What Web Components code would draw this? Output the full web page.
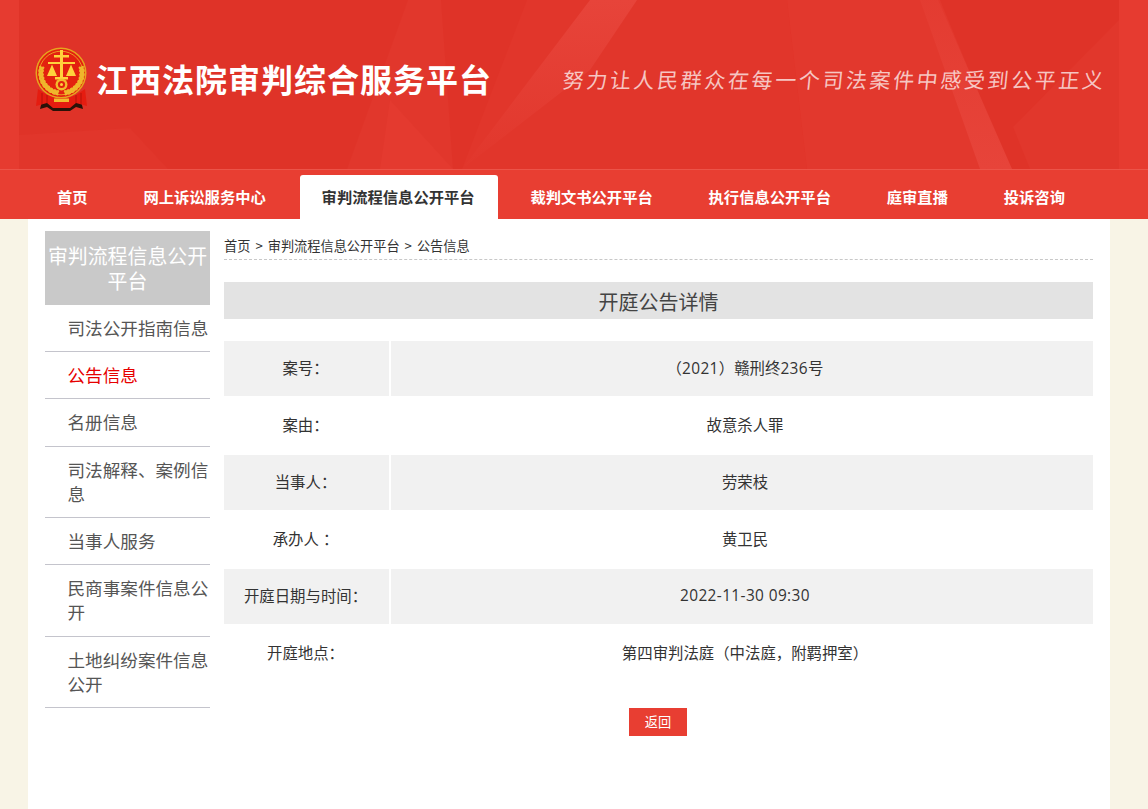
<!DOCTYPE html>
<html lang="zh-CN">
<head>
<meta charset="utf-8">
<title>开庭公告详情</title>
<style>
  html, body { margin: 0; padding: 0; }
  body {
    background: #f8f4e6;
    font-family: "Noto Sans CJK SC", "Liberation Sans", sans-serif;
    color: #333;
  }
</style>
</head>
<body>
<site-header></site-header>
<site-nav>
  <a>首页</a>
  <a>网上诉讼服务中心</a>
  <a class="on">审判流程信息公开平台</a>
  <a>裁判文书公开平台</a>
  <a>执行信息公开平台</a>
  <a>庭审直播</a>
  <a>投诉咨询</a>
</site-nav>
<page-body>
  <side-menu slot="side" heading="审判流程信息公开平台">
    <menu-item>司法公开指南信息</menu-item>
    <menu-item active>公告信息</menu-item>
    <menu-item>名册信息</menu-item>
    <menu-item>司法解释、案例信息</menu-item>
    <menu-item>当事人服务</menu-item>
    <menu-item>民商事案件信息公开</menu-item>
    <menu-item>土地纠纷案件信息公开</menu-item>
  </side-menu>
  <notice-detail heading="开庭公告详情">
    <detail-row label="案号：">（<span>2021</span>）赣刑终<span>236</span>号</detail-row>
    <detail-row label="案由：">故意杀人罪</detail-row>
    <detail-row label="当事人：">劳荣枝</detail-row>
    <detail-row label="承办人 ：">黄卫民</detail-row>
    <detail-row label="开庭日期与时间："><span>2022-11-30 09:30</span></detail-row>
    <detail-row label="开庭地点：">第四审判法庭（中法庭，附羁押室）</detail-row>
  </notice-detail>
</page-body>

<script>
function shadow(el, html) {
  el.attachShadow({ mode: 'open' }).innerHTML = html;
}

// one side of the wheat wreath on the emblem
function wheat() {
  let out = '';
  for (let i = 0; i < 9; i++) {
    const a = (168 + i * 11) * Math.PI / 180;
    const x = 27 + 20 * Math.cos(a);
    const y = 27 - 20 * Math.sin(a);
    const deg = 90 - (168 + i * 11);
    out += `<ellipse cx="${x.toFixed(1)}" cy="${y.toFixed(1)}" rx="3.4" ry="1.5" transform="rotate(${deg - 45} ${x.toFixed(1)} ${y.toFixed(1)})"/>`;
    out += `<ellipse cx="${x.toFixed(1)}" cy="${y.toFixed(1)}" rx="3.4" ry="1.5" transform="rotate(${deg + 45} ${x.toFixed(1)} ${y.toFixed(1)})"/>`;
  }
  return out;
}

class SiteHeader extends HTMLElement {
  connectedCallback() {
    shadow(this, `
      <style>
        :host { display: block; height: 169px; background: #e63b30; position: relative; overflow: hidden; }
        .bg { position: absolute; left: 19px; top: 0; width: 1100px; height: 169px; }
        .bar { position: relative; display: flex; align-items: center; height: 100%; padding: 0 0 12px 34px; box-sizing: border-box; }
        .logo { width: 54px; height: 66px; flex: none; }
        h1 { margin: 0 0 2px 8px; font-size: 32px; line-height: 40px; font-weight: 700; color: #fff; letter-spacing: 1px; white-space: nowrap; }
        p { margin: 0 0 0 71px; font-size: 21px; line-height: 30px; letter-spacing: 2.6px; color: rgba(255,255,255,.72); white-space: nowrap; transform: skewX(-6deg); }
      </style>
      <svg class="bg" viewBox="19 0 1100 169" preserveAspectRatio="none" aria-hidden="true">
        <defs>
          <linearGradient id="fadeDown" x1="0" y1="0" x2="0" y2="1">
            <stop offset="0" stop-color="#e7443a"/>
            <stop offset="1" stop-color="#e7443a" stop-opacity=".05"/>
          </linearGradient>
          <linearGradient id="fadeUp" x1="0" y1="1" x2="0" y2="0">
            <stop offset="0" stop-color="#e7443a"/>
            <stop offset="1" stop-color="#e7443a" stop-opacity=".3"/>
          </linearGradient>
        </defs>
        <rect x="19" width="1100" height="169" fill="#df3328"/>
        <polygon points="19,135 130,128 168,169 19,169" fill="#e1362b"/>
        <polygon points="408,0 441,0 453,169 347,169" fill="#e1372c"/>
        <polygon points="390,100 453,169 380,169" fill="#e43a2f"/>
        <polygon points="527,0 787,0 807,169 462,169" fill="#e1362b"/>
        <polygon points="590,0 637,0 590,70 462,169" fill="url(#fadeDown)"/>
        <polygon points="787,0 940,0 1010,169 807,169" fill="#e2382d"/>
        <polygon points="920,0 938,0 1012,169 980,169" fill="url(#fadeUp)"/>
        <polygon points="1013,127 1119,20 1119,169 1030,169" fill="#e1372c"/>
      </svg>
      <div class="bar">
        <svg class="logo" viewBox="0 0 54 66" aria-hidden="true">
          <path d="M8 55 L6 63 L13 61 L19 65 L36 65 L42 61 L49 63 L47 55 Z" fill="#2a1208"/>
          <circle cx="27" cy="27" r="25.500" fill="#e7a51e"/>
          <circle cx="27" cy="27" r="24" fill="#e3210f"/>
          <circle cx="27" cy="27" r="21.800" fill="none" stroke="#f0b52a" stroke-width=".8"/>
          <g fill="#efb62c">${wheat()}</g>
          <g fill="#efb62c" transform="matrix(-1 0 0 1 55 0)">${wheat()}</g>
          <path d="M26 4 h3 v5 h6 v2.500 h-6 v4.500 h12 v2 h-12 v13 h5 v2.500 h-13 v-2.500 h5 v-13 h-12 v-2 h12 v-4.500 h-6 v-2.500 h6 z" fill="#ffd23c"/>
          <path d="M18 18.500 L13 30 H23 Z M37 18.500 L32 30 H42 Z" fill="#ffd23c"/>
          <circle cx="27.500" cy="38.500" r="6" fill="#f2bb2d"/>
          <circle cx="27.500" cy="38.500" r="3.600" fill="#e3210f"/>
          <circle cx="27.500" cy="38.500" r="1.500" fill="#ffd23c"/>
          <path d="M4 43 L2 60 L13 57 L19 62 L36 62 L42 57 L53 60 L51 43 L42 49 L34 52 L21 52 L13 49 Z" fill="#e51c10"/>
          <path d="M20 52.500 H35 V56 H20 Z" fill="#f2bb2d"/>
          <path d="M13 49 V57 M8 47 V58 M42 49 V57 M47 47 V58" stroke="#a81208" stroke-width=".8"/>
        </svg>
        <h1>江西法院审判综合服务平台</h1>
        <p>努力让人民群众在每一个司法案件中感受到公平正义</p>
      </div>`);
  }
}

class SiteNav extends HTMLElement {
  connectedCallback() {
    shadow(this, `
      <style>
        :host { display: block; height: 49px; background: #e83e32; border-top: 1px solid #ec5449; }
        nav { display: flex; align-items: flex-end; gap: 11.8px; height: 100%; padding-left: 35px; box-sizing: border-box; }
        ::slotted(a) {
          display: block; height: 44px; line-height: 43px; padding: 0 22px;
          font-size: 15.3px; font-weight: 700; color: #fff; white-space: nowrap;
        }
        ::slotted(a.on) { background: #fff; color: #333; border-radius: 3px 3px 0 0; padding-right: 23.4px; margin-right: -1.4px; }
      </style>
      <nav><slot></slot></nav>`);
  }
}

class PageBody extends HTMLElement {
  connectedCallback() {
    shadow(this, `
      <style>
        :host { display: block; width: 1082px; min-height: 590px; margin-left: 28px; background: #fff; }
        .wrap { display: flex; padding: 12px 17px 0 17px; gap: 14px; }
      </style>
      <div class="wrap"><slot name="side"></slot><slot></slot></div>`);
  }
}

class SideMenu extends HTMLElement {
  connectedCallback() {
    shadow(this, `
      <style>
        :host { display: block; width: 165px; flex: none; }
        h2 { margin: 0; height: 74px; padding: 0 2px; box-sizing: border-box; display: flex; align-items: center; justify-content: center; text-align: center; background: #c9c9c9; color: #fff; font-size: 19.9px; line-height: 25px; font-weight: 400; }
      </style>
      <h2>${this.getAttribute('heading')}</h2>
      <slot></slot>`);
  }
}

class MenuItem extends HTMLElement {
  connectedCallback() {
    const color = this.hasAttribute('active') ? '#e60000' : '#555';
    shadow(this, `
      <style>
        :host { display: block; padding: 11px 0 11px 22.5px; border-bottom: 1px solid #c4c4cc; font-size: 17.6px; line-height: 24.18px; color: ${color}; }
      </style>
      <slot></slot>`);
  }
}

class NoticeDetail extends HTMLElement {
  connectedCallback() {
    shadow(this, `
      <style>
        :host { display: block; width: 869px; flex: none; }
        .crumb { height: 28px; line-height: 29px; font-size: 13.2px; color: #333; border-bottom: 1px dashed #c8c8c8; }
        .crumb span { margin: 0 5px; }
        h3 { margin: 22px 0 22px; height: 37px; line-height: 39px; background: #e3e3e3; text-align: center; font-size: 20px; font-weight: 400; color: #444; }
        .rows { display: flex; flex-direction: column; gap: 2px; }
        .back { display: block; width: 58px; height: 28px; line-height: 28px; margin: 27px 0 0 405px; text-align: center; font-size: 13.2px; color: #fff; background: #e83e32; }
      </style>
      <div class="crumb">首页<span>&gt;</span>审判流程信息公开平台<span>&gt;</span>公告信息</div>
      <h3>${this.getAttribute('heading')}</h3>
      <div class="rows"><slot></slot></div>
      <a class="back">返回</a>`);
  }
}

let rowIndex = 0;
class DetailRow extends HTMLElement {
  connectedCallback() {
    const bg = rowIndex++ % 2 === 0 ? '#f1f1f1' : '#fff';
    shadow(this, `
      <style>
        :host { display: flex; gap: 2px; height: 55px; font-family: "Open Sans", "Noto Sans CJK SC", sans-serif; font-size: 15.4px; color: #333; }
        div { display: flex; align-items: center; justify-content: center; padding-bottom: 3px; box-sizing: border-box; background: ${bg}; }
        .k { width: 165px; flex: none; padding-right: 2px; white-space: pre; }
        .v { flex: 1; padding-left: 6px; }
        ::slotted(span) { letter-spacing: .4px; }
      </style>
      <div class="k">${this.getAttribute('label')}</div>
      <div class="v"><span class="t"><slot></slot></span></div>`);
  }
}

customElements.define('site-header', SiteHeader);
customElements.define('site-nav', SiteNav);
customElements.define('page-body', PageBody);
customElements.define('side-menu', SideMenu);
customElements.define('menu-item', MenuItem);
customElements.define('notice-detail', NoticeDetail);
customElements.define('detail-row', DetailRow);
</script>
</body>
</html>
